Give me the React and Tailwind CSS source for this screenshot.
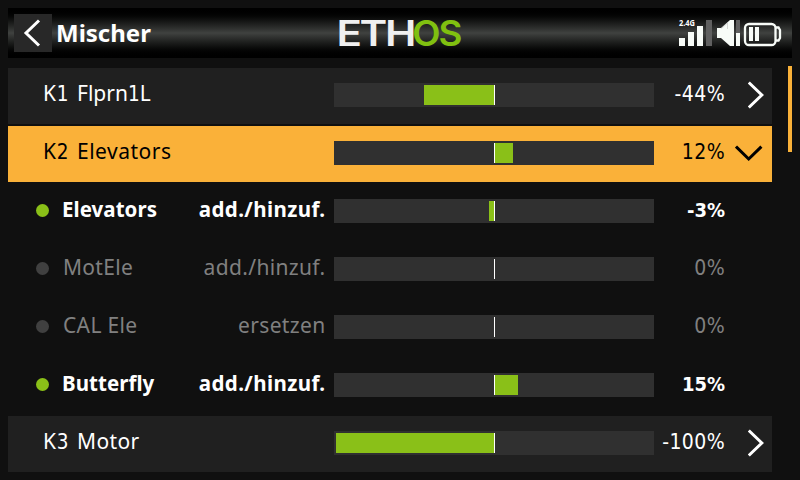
const UI_FONT = "font-['Noto_Sans','DejaVu_Sans',sans-serif]";

const rows = [
  { kind: "group", channel: "K1", name: "Flprn1L", track: "tracking-[0px]", value: "-44%", left: 70, right: 0 },
  { kind: "active", channel: "K2", name: "Elevators", track: "tracking-[0.5px]", value: "12%", left: 0, right: 18 },
  { kind: "on", name: "Elevators", track: "tracking-[0.05px]", mode: "add./hinzuf.", value: "-3%", left: 5, right: 0 },
  { kind: "off", name: "MotEle", track: "tracking-[0.3px]", mode: "add./hinzuf.", value: "0%", left: 0, right: 0 },
  { kind: "off", name: "CAL Ele", track: "tracking-[0.35px]", mode: "ersetzen", value: "0%", left: 0, right: 0 },
  { kind: "on", name: "Butterfly", track: "tracking-[0.05px]", mode: "add./hinzuf.", value: "15%", left: 0, right: 23 },
  { kind: "group", channel: "K3", name: "Motor", track: "tracking-[0.35px]", value: "-100%", left: 158, right: 0 },
];

const rowStyle = {
  group: "bg-[#202020] text-[21px] text-white",
  active: "bg-[#fab139] text-[21px] text-black",
  on: "text-[20.5px] text-white font-bold",
  off: "text-[21px] text-[#808080]",
};

const DIGITS = "font-['DejaVu_Sans_Condensed','DejaVu_Sans',sans-serif]";

// Digits use a typeface with a footed "1"; letters keep the UI face.
function Mixed({ text }) {
  return text.split(/(\d+)/).map((part, i) => (
    <span key={i} className={i % 2 ? `${DIGITS} text-[20.5px]` : ""}>
      {part}
    </span>
  ));
}

function Meter({ left, right }) {
  return (
    <div className="flex h-6 w-[320px] shrink-0 bg-[#303030] py-0.5">
      <div className="flex w-40 justify-end">
        <div className="h-full bg-[#8ac018]" style={{ width: left }} />
      </div>
      <div className="h-full w-px bg-white" />
      <div className="h-full bg-[#8ac018]" style={{ width: right }} />
    </div>
  );
}

function Row({ row }) {
  const bold = row.kind === "on";
  return (
    <div className={`flex h-14 w-[764px] leading-[50px] ${rowStyle[row.kind]}`}>
      {row.mode ? (
        <div className="flex w-[326px] pr-[8.5px]">
          <div className={`mt-[20px] ml-7 size-[13px] shrink-0 rounded-full ${bold ? "bg-[#8ac018]" : "bg-[#404040]"}`} />
          <div className={`flex-1 ${bold ? "ml-[13px]" : "ml-[14px]"} ${row.track}`}>{row.name}</div>
          <div className={bold ? "tracking-[0.4px]" : "tracking-[0.35px]"}>{row.mode}</div>
        </div>
      ) : (
        <div className="flex w-[326px] pl-[35px]">
          <div className="w-[34px] tracking-[0.7px]">
            <Mixed text={row.channel} />
          </div>
          <div className={row.track}>
            <Mixed text={row.name} />
          </div>
        </div>
      )}
      <div className="pt-[15px]">
        <Meter left={row.left} right={row.right} />
      </div>
      <div className={`flex w-[71px] justify-end leading-[52px] whitespace-nowrap ${DIGITS} ${bold ? "text-[20px]" : "text-[21px] tracking-[0.4px]"}`}>
        <span>{row.value}</span>
      </div>
      <div className="flex flex-1">
        {row.kind === "group" && (
          <svg className="mt-3 ml-[23px]" width="20" height="30" viewBox="0 0 20 30" fill="none" stroke="currentColor" strokeWidth="3">
            <path d="M0.8 2.5L13.8 15L0.8 27.5" />
          </svg>
        )}
        {row.kind === "active" && (
          <svg className="mt-[18px] ml-2.5" width="30" height="20" viewBox="0 0 30 20" fill="none" stroke="currentColor" strokeWidth="3">
            <path d="M1 2.6L13.7 15L26.4 2.6" />
          </svg>
        )}
      </div>
    </div>
  );
}

function Logo() {
  return (
    <svg className="ml-[175px] font-['Inter',sans-serif]" width="142" height="50" viewBox="330 8 142 50" fontSize="35" fontWeight="600">
      <text x="336.500" y="46" fill="#f0f0f0" textLength="77.500" lengthAdjust="spacingAndGlyphs" letterSpacing="-2">ETH</text>
      <text x="412.300" y="46" fill="#80c010" textLength="48" lengthAdjust="spacingAndGlyphs" letterSpacing="-2">OS</text>
    </svg>
  );
}

function StatusIcons() {
  return (
    <svg className="ml-auto" width="116" height="50" viewBox="676 8 116 50">
      <text x="679" y="26" fill="#fff" fontSize="8" fontWeight="700" textLength="16" lengthAdjust="spacingAndGlyphs">2.4G</text>
      <g fill="#f8fcf8">
        <rect x="679" y="38" width="6" height="8" />
        <rect x="688" y="32" width="6" height="14" />
        <rect x="697" y="26" width="6" height="20" />
        <rect x="706" y="20" width="6" height="26" fill="#606060" />
        <path d="M717 28H721L730 20H734V46H730L721 38H717Z" />
        <path d="M721.500 28.500L727.500 23V29" fill="none" stroke="#c0c0c0" strokeWidth="0.600" />
        <rect x="736" y="20" width="4" height="13" fill="#606060" />
        <rect x="736" y="33" width="4" height="13" />
        <rect x="749" y="27" width="4" height="14" />
        <rect x="755" y="27" width="4" height="14" />
      </g>
      <g fill="none" stroke="#f8fcf8" strokeWidth="2.300">
        <rect x="745" y="24" width="30.500" height="21" rx="4" />
        <path d="M775.500 27.500H778.500L780 30V38L778.500 40.500H775.500" />
      </g>
    </svg>
  );
}

export default function App() {
  return (
    <div className={`flex h-[480px] w-[800px] flex-col overflow-hidden bg-[#101010] p-2 ${UI_FONT}`}>
      <header className="flex h-[50px] shrink-0 bg-linear-to-b from-black via-[#404240] to-black">
        <div className="mt-1.5 ml-1.5 size-[38px] bg-[#282828]">
          <svg width="38" height="38" viewBox="14 14 38 38" fill="none" stroke="#fff" strokeWidth="3">
            <path d="M39 20.500L26 33L39 45.500" />
          </svg>
        </div>
        <h1 className="ml-1 w-[99px] text-[24px] leading-[49px] font-bold text-white">Mischer</h1>
        <Logo />
        <StatusIcons />
      </header>
      <div className="mt-2 flex">
        <div className="mt-0.5 flex flex-col gap-0.5">
          {rows.map((row, i) => (
            <Row key={i} row={row} />
          ))}
        </div>
        <div className="ml-4 h-[86px] w-1 bg-[#fab139]" />
      </div>
    </div>
  );
}
